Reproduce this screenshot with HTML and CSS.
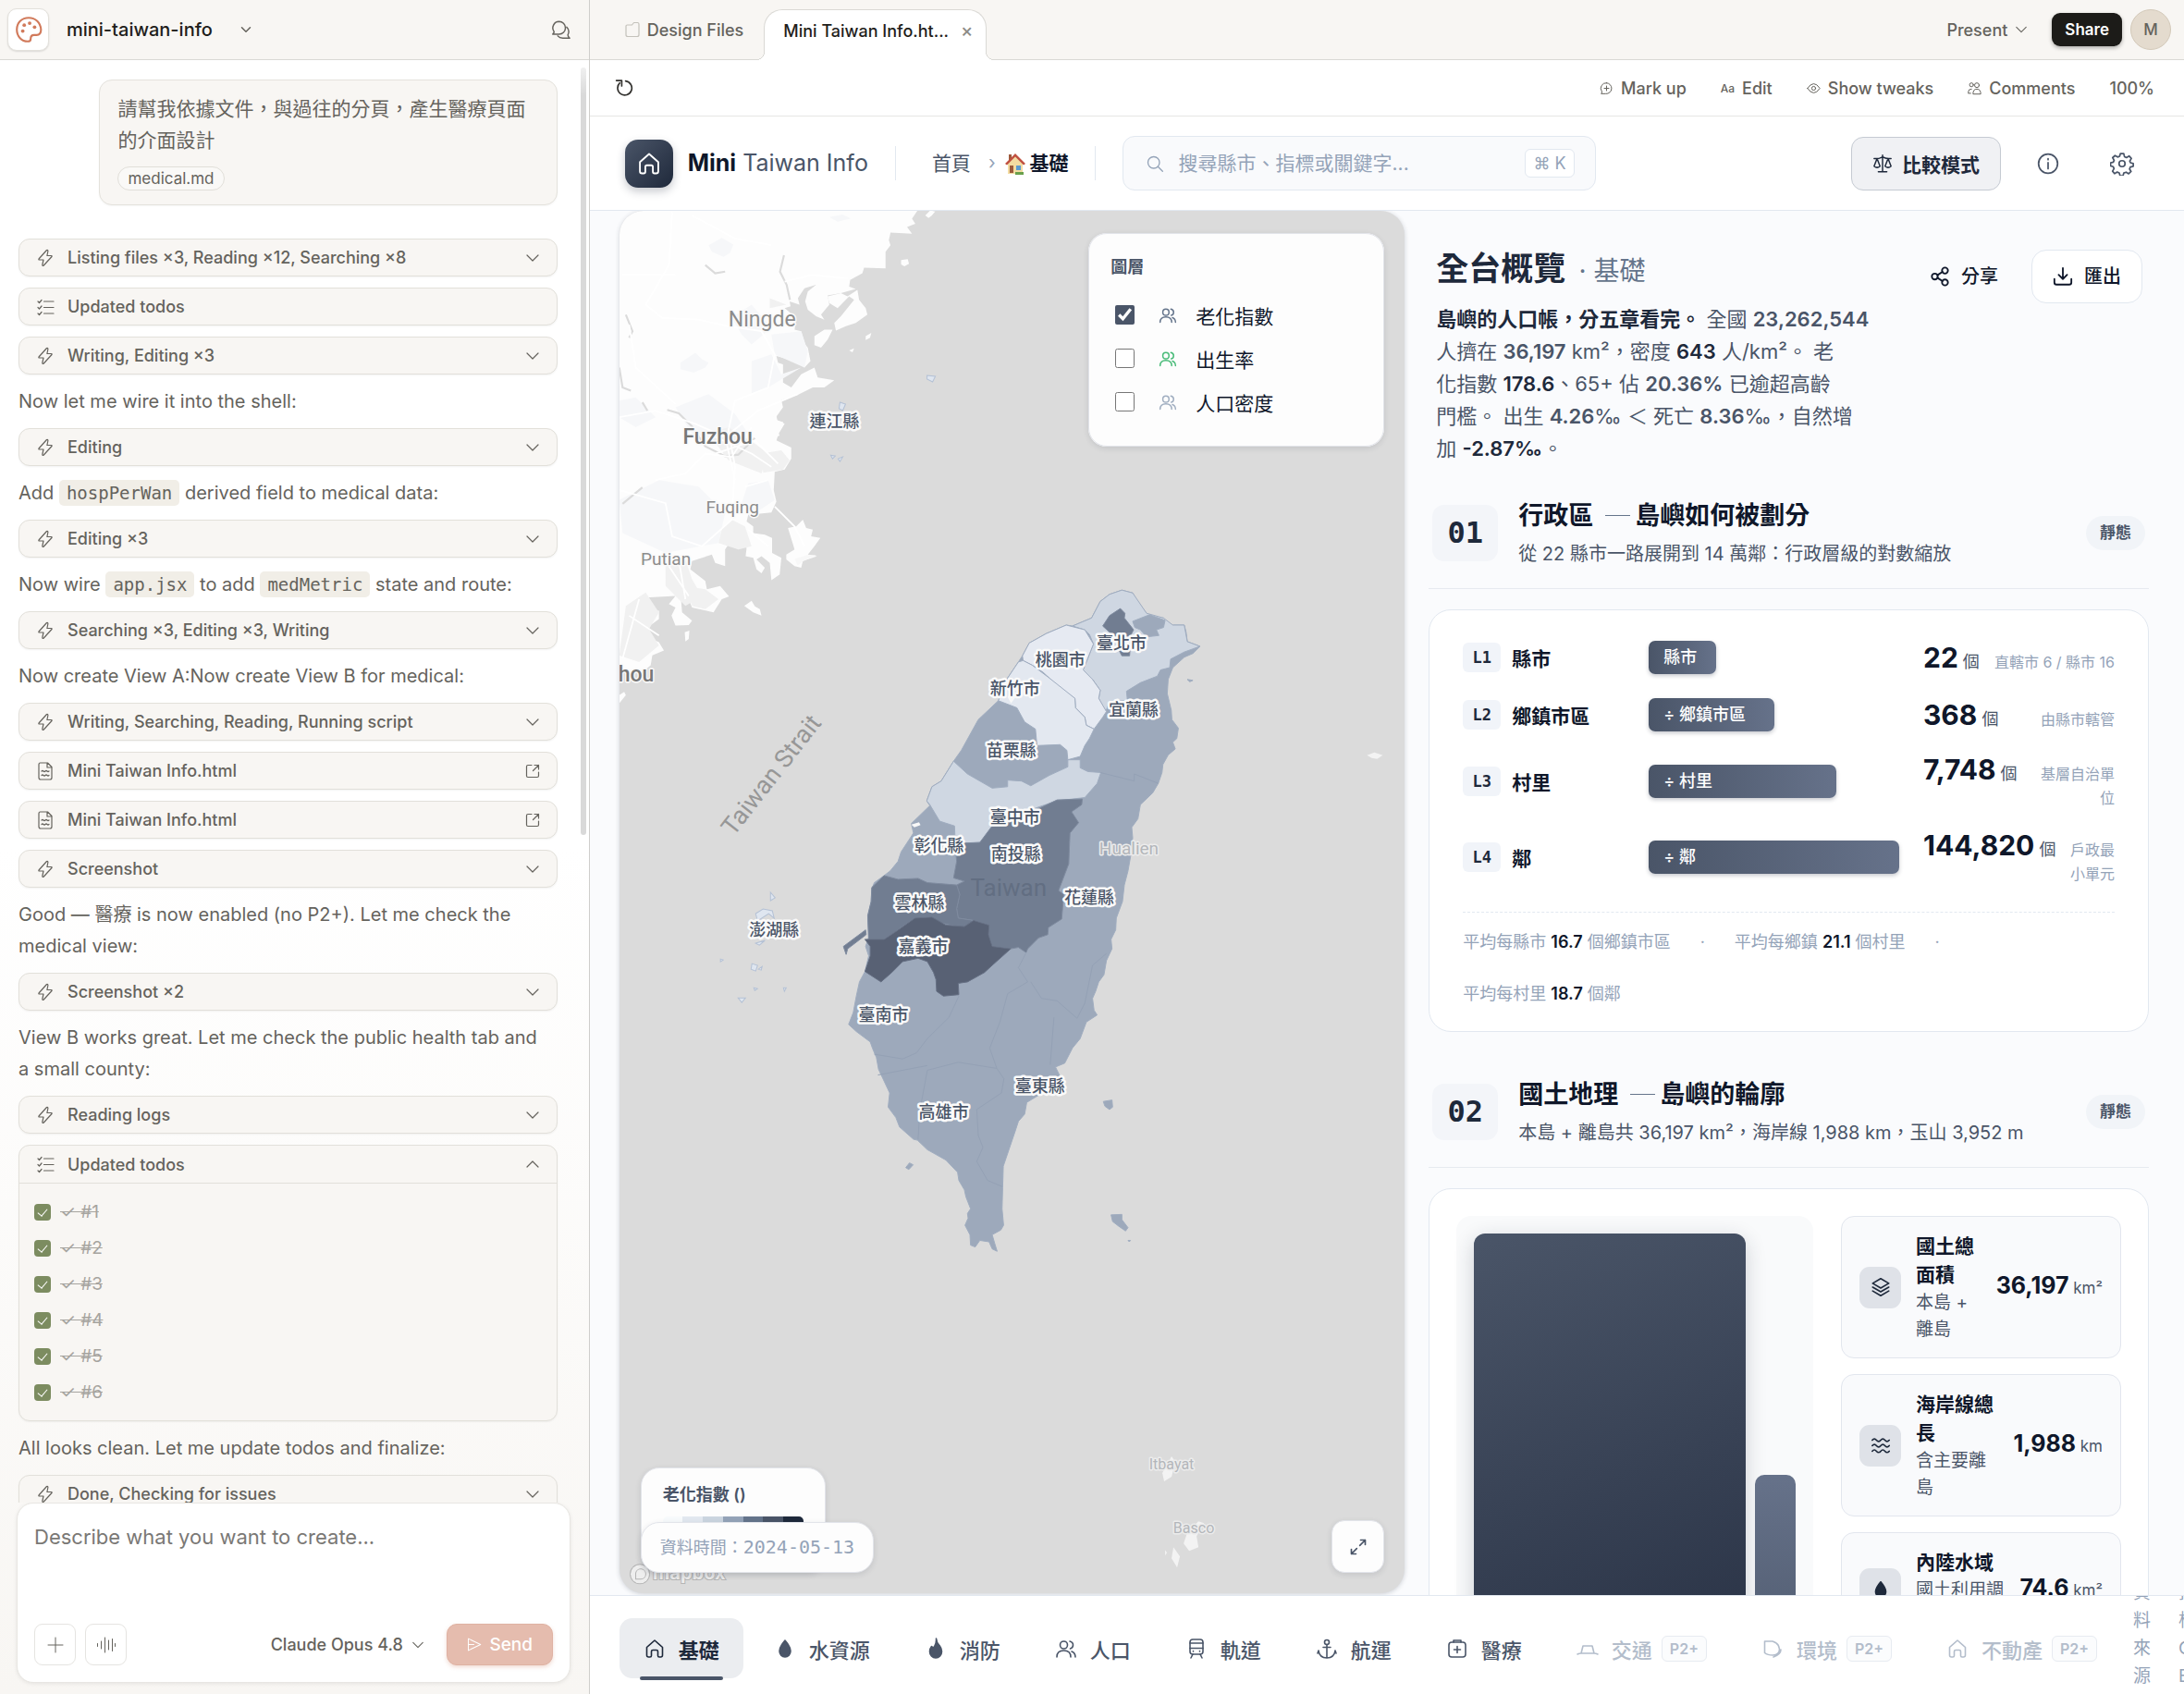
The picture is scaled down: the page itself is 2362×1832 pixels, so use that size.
FILE: index.html
```
<!DOCTYPE html>
<html lang="zh-Hant">

<head>
	<meta charset="utf-8">
	<meta name="viewport" content="width=device-width, initial-scale=1">
	<title>mini-taiwan-info</title>
	<link rel="stylesheet" href="styles.css">
</head>

<body>

	<!-- Shared icons -->
	<svg class="sprite" aria-hidden="true">
		<symbol id="i-down" viewBox="0 0 16 16"><path d="M2 5l6 6 6-6" /></symbol>
		<symbol id="i-up" viewBox="0 0 16 16"><path d="M2 11l6-6 6 6" /></symbol>
		<symbol id="i-bolt" viewBox="0 0 20 20"><path d="M11.500 1.500L3 11q-.5 1 .5 1h4.500L6.800 17.500q.2 1.600 1.500.5L17 8.500q.5-1-.5-1h-4.600l1-5q-.2-1.600-1.400-1z" /></symbol>
		<symbol id="i-todo" viewBox="0 0 20 20"><path d="M2 4l1.500 1.500L6 2.500M2 10.500L3.500 12 6 9M2 17l1.500 1.500L6 15.500M8.500 4H19M8.500 10.500H19M8.500 17H19" /></symbol>
		<symbol id="i-doc" viewBox="0 0 20 20"><path d="M4.500 1h8l4.500 4.500V17q0 2-2 2H5q-2 0-2-2V3q0-2 1.500-2zM12 1v5h5M6 10q1-1 2 0t2 0 2 0 2 0M6 14.500q1-1 2 0t2 0 2 0 2 0" /></symbol>
		<symbol id="i-open" viewBox="0 0 16 16"><path d="M7 1.500H3Q1.500 1.500 1.500 3v10q0 1.500 1.500 1.500h10q1.500 0 1.500-1.500V9M10 1.500h4.500V6M14.500 1.500L8.500 7.500" /></symbol>
		<symbol id="i-home" viewBox="0 0 24 24"><path d="M12 3L3.500 10.500V19q0 2 2 2H7q1.500 0 1.500-1.500V15q0-1.500 1.500-1.500h4q1.500 0 1.500 1.500v4.500q0 1.500 1.500 1.500h1.500q2 0 2-2v-8.500z" /></symbol>
		<symbol id="i-people" viewBox="0 0 24 24"><circle cx="9.500" cy="8" r="4" /><path d="M2 21q0-7 7.500-7t7.500 7M16 4q3.500.8 3.500 4T16.500 12M18 15q4 1.500 4 6" /></symbol>
		<symbol id="i-drop" viewBox="0 0 24 24"><path class="solid" d="M12 3q6 7 6 11.500a6 6.500 0 0 1-12 0Q6 10 12 3z" /></symbol>
	</svg>

	<!-- Chat side -->
	<aside class="chat">
		<header class="chat-head">
			<button class="brand-btn" aria-label="Projects">
				<svg viewBox="0 0 30 30"><path d="M15 3C8 3 3 8 3 15s5 12 11 12c2.500 0 3-1 3-2.500 0-2.500 1-4 3.500-4H23c3 0 4.500-2 4.500-5.500C27 8 22 3 15 3z" /><g class="dots"><circle cx="9" cy="16.500" r="1.800" /><circle cx="10.500" cy="10.500" r="1.800" /><circle cx="16" cy="8.500" r="1.800" /><circle cx="21" cy="12.500" r="1.800" /></g></svg>
			</button>
			<h1 class="project">mini-taiwan-info</h1>
			<svg class="ico small"><use href="#i-down" /></svg>
			<button class="plain chats-btn" aria-label="Chats">
				<svg class="ico" viewBox="0 0 24 24"><path d="M10.500 2.500a7.500 7.500 0 1 1 0 15H3q2-2 1.500-3.200A7.500 7.500 0 0 1 10.500 2.500zM19.500 9q4 4 1.500 9-.5 1.500 2 4h-8q-4 0-6-2.500" /></svg>
			</button>
		</header>

		<div class="feed">
			<div class="bubble">
				<p>請幫我依據文件，與過往的分頁，產生醫療頁面的介面設計</p>
				<span class="file-chip">medical.md</span>
			</div>

			<button class="step"><svg class="ico"><use href="#i-bolt" /></svg><span>Listing files ×3, Reading ×12, Searching ×8</span><svg class="ico end"><use href="#i-down" /></svg></button>
			<button class="step"><svg class="ico"><use href="#i-todo" /></svg><span>Updated todos</span></button>
			<button class="step"><svg class="ico"><use href="#i-bolt" /></svg><span>Writing, Editing ×3</span><svg class="ico end"><use href="#i-down" /></svg></button>
			<p class="say">Now let me wire it into the shell:</p>
			<button class="step"><svg class="ico"><use href="#i-bolt" /></svg><span>Editing</span><svg class="ico end"><use href="#i-down" /></svg></button>
			<p class="say">Add <code>hospPerWan</code> derived field to medical data:</p>
			<button class="step"><svg class="ico"><use href="#i-bolt" /></svg><span>Editing ×3</span><svg class="ico end"><use href="#i-down" /></svg></button>
			<p class="say">Now wire <code>app.jsx</code> to add <code>medMetric</code> state and route:</p>
			<button class="step"><svg class="ico"><use href="#i-bolt" /></svg><span>Searching ×3, Editing ×3, Writing</span><svg class="ico end"><use href="#i-down" /></svg></button>
			<p class="say">Now create View A:Now create View B for medical:</p>
			<button class="step"><svg class="ico"><use href="#i-bolt" /></svg><span>Writing, Searching, Reading, Running script</span><svg class="ico end"><use href="#i-down" /></svg></button>
			<button class="step"><svg class="ico"><use href="#i-doc" /></svg><span>Mini Taiwan Info.html</span><svg class="ico end"><use href="#i-open" /></svg></button>
			<button class="step"><svg class="ico"><use href="#i-doc" /></svg><span>Mini Taiwan Info.html</span><svg class="ico end"><use href="#i-open" /></svg></button>
			<button class="step"><svg class="ico"><use href="#i-bolt" /></svg><span>Screenshot</span><svg class="ico end"><use href="#i-down" /></svg></button>
			<p class="say">Good — 醫療 is now enabled (no P2+). Let me check the medical view:</p>
			<button class="step"><svg class="ico"><use href="#i-bolt" /></svg><span>Screenshot ×2</span><svg class="ico end"><use href="#i-down" /></svg></button>
			<p class="say">View B works great. Let me check the public health tab and<br>a small county:</p>
			<button class="step"><svg class="ico"><use href="#i-bolt" /></svg><span>Reading logs</span><svg class="ico end"><use href="#i-down" /></svg></button>
			<div class="todos">
				<button class="step"><svg class="ico"><use href="#i-todo" /></svg><span>Updated todos</span><svg class="ico end"><use href="#i-up" /></svg></button>
				<ul>
					<li><label><input type="checkbox" checked> <s>✓ #1</s></label></li>
					<li><label><input type="checkbox" checked> <s>✓ #2</s></label></li>
					<li><label><input type="checkbox" checked> <s>✓ #3</s></label></li>
					<li><label><input type="checkbox" checked> <s>✓ #4</s></label></li>
					<li><label><input type="checkbox" checked> <s>✓ #5</s></label></li>
					<li><label><input type="checkbox" checked> <s>✓ #6</s></label></li>
				</ul>
			</div>
			<p class="say">All looks clean. Let me update todos and finalize:</p>
			<button class="step"><svg class="ico"><use href="#i-bolt" /></svg><span>Done, Checking for issues</span><svg class="ico end"><use href="#i-down" /></svg></button>
			<div class="scroll-thumb"></div>
		</div>

		<form class="composer">
			<textarea aria-label="Message" placeholder="Describe what you want to create..."></textarea>
			<div class="composer-row">
				<button type="button" class="sq-btn" aria-label="Add"><svg class="ico" viewBox="0 0 20 20"><path d="M10 2v16M2 10h16" /></svg></button>
				<button type="button" class="sq-btn" aria-label="Voice"><svg class="ico" viewBox="0 0 20 20"><path d="M.5 8.500v3M4.500 6v8M8.500 2v16M12.500 5v10M16.500 3.500v13M19.500 8.500v3" /></svg></button>
				<button type="button" class="plain model">Claude Opus 4.8 <svg class="ico"><use href="#i-down" /></svg></button>
				<button type="button" class="send"><svg class="ico" viewBox="0 0 20 20"><path d="M3 2.500v15L18.500 10zM3 10h7" /></svg> Send</button>
			</div>
		</form>
	</aside>

	<!-- Preview side -->
	<main class="stage">
		<header class="tabs">
			<button class="tab"><svg class="ico pale" viewBox="0 0 16 18"><path d="M1 5v9.500Q1 16.500 3 16.500h10q2 0 2-2v-11q0-2-1.500-2H9.500L7.500 4H2.500Q1 4 1 5z" /></svg>Design Files</button>
			<div class="tab active"><span>Mini Taiwan Info.ht...</span><button class="plain close" aria-label="Close tab">×</button></div>
			<div class="tabs-end">
				<button class="plain present">Present <svg class="ico"><use href="#i-down" /></svg></button>
				<button class="share">Share</button>
				<span class="avatar">M</span>
			</div>
		</header>

		<div class="tools">
			<button class="plain reload" aria-label="Reload"><svg class="ico" viewBox="0 0 20 20"><path d="M6 4.500a7.300 7.300 0 1 0 6-2M2.500 2H8v5.500" /></svg></button>
			<button class="plain"><svg class="ico" viewBox="0 0 18 18"><path d="M9 2a7 7 0 1 1-1 14H2q1.500-1.500.8-3A7 7 0 0 1 9 2zM9 6v6M6 9h6" /></svg>Mark up</button>
			<button class="plain"><small>Aa</small>Edit</button>
			<button class="plain"><svg class="ico" viewBox="0 0 18 18"><path d="M1 9q8-12 16 0-8 12-16 0z" /><circle cx="9" cy="9" r="2.500" /></svg>Show tweaks</button>
			<button class="plain"><svg class="ico" viewBox="0 0 18 18"><circle cx="5" cy="4.500" r="2.500" /><circle cx="12" cy="5" r="3" /><path d="M1 15v-2q0-3 4-3M7 16q0-6 5-6t5 6zM1 15.500h3" /></svg>Comments</button>
			<button class="plain">100%</button>
		</div>

		<div class="app">
			<header class="app-head">
				<span class="logo"><svg class="ico"><use href="#i-home" /></svg></span>
				<span class="app-name"><b>Mini</b> Taiwan Info</span>
				<nav class="crumbs">
					<a href="#">首頁</a>
					<i>›</i>
					<svg class="house" viewBox="0 0 22 24"><path fill="#f3dca2" d="M3 12l8-8 8 8v11H3z" /><path fill="#9d5b3c" d="M4 2h3v6H4zM5 14h4v8H5z" /><path fill="#5c9bd0" d="M12 14h5v5h-5z" /><path fill="#c0503f" d="M0 12L11 1l11 11-2 1.500-9-9-9 9z" /><path fill="#69a04c" d="M11 21h9v3h-9z" /></svg>
					<b>基礎</b>
				</nav>
				<label class="search">
					<svg class="ico" viewBox="0 0 24 24"><circle cx="10.500" cy="10.500" r="7.500" /><path d="M16 16l6 6" /></svg>
					<input type="search" aria-label="搜尋" placeholder="搜尋縣市、指標或關鍵字...">
					<kbd>⌘ K</kbd>
				</label>
				<button class="compare"><svg class="ico" viewBox="0 0 24 24"><path d="M12 2v19M7 21.500h10M2 6h3q4 0 7-2 3 2 7 2h3M5.500 6l-3.500 9q3.500 3 7 0zM18.500 6L15 15q3.500 3 7 0z" /></svg>比較模式</button>
				<button class="plain round" aria-label="說明"><svg class="ico" viewBox="0 0 24 24"><circle cx="12" cy="12" r="9.500" /><path d="M12 11v6M12 7v1" /></svg></button>
				<button class="plain round" aria-label="設定"><svg class="ico" viewBox="0 0 24 24"><circle cx="12" cy="12" r="3" /><path d="M10.300 2h3.400l.7 3 2 .9L19 4.300l2.300 2.500-1.600 2.600.7 1.700 2.800.8v2.700l-2.900.7-.8 2 1.500 2.500-2.400 2.300-2.500-1.600-2.400.9-.7 2.600h-3l-.8-2.800-2-.8-2.700 1.600L2.500 19.500 4 17l-.8-2-2.700-.8v-3l2.800-.7.8-1.900L2.600 6 5 3.900l2.600 1.500 2-.8z" /></svg></button>
			</header>

			<div class="app-body">
				<section class="map">
					<svg class="map-art" viewBox="671 228 848 1495" preserveAspectRatio="xMidYMid slice">
						<!-- Fujian coast -->
						<g class="mainland" transform="translate(660 220) scale(.35714)">
							<path d="M20 10L935 20l-20 30 10 15-25 10 15 20-65-3-5 23 5 15-15 20v50l-65-2-5 17-37 20-3 20 20 7-45 13-40 7 5 28-25 30 10 15-25-10-25-20-8-25 8-30 25-20-35 10-20 30 5 20-30-10 3 15-18 5 35 30-5 35 20 5 12 40 8 10 8 40-18 20-30-20-55-15 5 20 15 5v55l25 15 30-40 40-20 10 30 50 8-30 22h-35l-45 22-50 16 5 22-25 35 30 15-18 30-7 20 45 22v33l-20 33-30 7-3 55 8 35-15 33-70 7-5 20 20 15v20l35 5 22 10v45l28 15-5 50-25 18-5-53-25-20-15 10 25 25-10 17-15-12-10-35-23-5 3-25-20-10-25-15-20 30v50l-30-10-10-25-60 20-5 25 45 35 5 25 40-10 27 32-22 8-25 40-65-15-10-25-25-20 5 60 30 25-10 13-40 2-12-30 12-25-20-10 20-25-90 5-15 10 10 30h45v25l-20 15-32 10 7 25 45 20 15 25-35 15-5 30-25 20H20z" />
							<path d="M660 285l40-10 20 10 30-20 5 30 20 25 5 20-35 25-30 10-30 13-5-23 20-20 40-50-15-10-35 35-25-15zM620 405l30-20h25l-15 30-20 25-20-8zM775 405l17-10-4 15-13 7zM725 448l15-6-5 12zM540 985l25-5 20-20 10 25 20 5-5 20 28 5-18 25-20 25 28 5-43 15-5 20-20-5-25-20v-15l25-15zM408 1220l22-15 10 17 15 8 5 20-25-10zM228 1300l14-5-2 25-10 8zM30 1490l15-10 5 10-20 25zM955 40l15-15 15 3-10 12-10 8zM882 175l20-3 4 14-14 8-10-6zM495 640l10 5 3 15 18 5-5 8-20-5zM450 710l30-30 25 5 10 20-25 10-30 15z" />
							<g class="hills"><path d="M300 130l40-22 35 20-10 25-20 12-35-15zM215 485l45-30 20 20 20 10-10 15-35 15-40-10zM370 350l60-40 60 70-60 50-30-30zM430 480l60-20 30 60 60-20-100 60-50 20zM490 400l90-10 20 60-10 50-90-40zM200 620l100-40 80 60 40 60-80 20-90-20zM30 600l50-10 60 60-60 30-50-30zM30 900l120-60 120 20 80 80-20 90-160 30-130-60zM420 850l60-10 20 60-60 40-40-30zM665 45l40-8 25 12-40 10z" /></g>
							<g class="town"><path d="M300 700l60-20 80 50 40 30-20 60-100-40zM460 760l60-10 25 30-20 28-60 10zM370 960l40 20 20 60-40 10-60-20 10-40zM170 1090l60-10 20 60 30 50-50 30-60-60zM50 1220l60-40 40 60-30 50 30 50-60 50-60-20zM230 1160l60 10 40 30-40 30-40-10zM485 290l50 20-50 10z" /></g>
							<g class="river"><path d="M528 160l-12 50 20 40 10 45M290 190l30 25 30-5M50 340l20 50-10 20M30 500l10 60 25 10M100 605l15 25M175 628l35 10 40 40 40 60 60 30 40-5 50-50M40 912l60-50" /></g>
							<g class="roads"><path d="M190 30l-10 160-70 120 50 40 110 5 90 20 100 15 40 70-20 100-100 40-20 90 20 110-10 160-90 80-90-30-20-100-140-40M30 650l110-20 120 40 90 40 100-80 120-50M140 840l90-20 60-60 80 10 60-90M300 700l130 60 60 40M320 760l120-40 70 70M350 710l30 130M410 860l70-20M210 1080l20 120M180 1100l60 90M60 1250l90 60M90 1200l-50 180M60 370l20 130 120 110M250 40l130 70 110 20M40 220l160 0M530 240l80-20 110 10M500 920l60 60 30 60M420 990l60 50" /></g>
						</g>

						<g class="taiwan" transform="translate(860 600) scale(.33333 .5102)">
							<path class="c4" d="M1060 76l35 6 17 20 28 23 20 8 35 2 5 12 25 3h37l6 15 4 20 41 10-23 15-28 8-37 22-15 25-3 30 13 35 2 20 21 18-5 22-13 8 8 14-23 13-17 20-3 17-12 23-18 20-40 25-8 30-20 18 3 22-7 40-8 30-12 30-6 35-20 35-2 25-15 20 3 20-18 25-8 30-17 15-10 20-10 15 5 25 10 10-35 15-20 35-25 20-25 32-30 8 15 20-10 15-60 25-38 15-7 25-20 15-10 20-39 75-2 45-2 45 5 35-9 10-28 10 8 18 8 17-16-5-10-15-30-3-15 14-15-4-2-22-16-20 10-15-2-10 10-10-15-25-5-15-18-20-4-17-38-26-60-22-32-20-13-2-45-26-12-20-25-22 5-30-18-25-18-25-7-25-13-20-7-13-45-22-25-15 15-25 10-35 10-30 18-22 12-33-10-20 10-20-3-45 11-30 2-25 8-15 32-15 20-10 25-20 10-20 40-40-7-20 60-38-10-10 17-30 30-12 40-42 25-23 55-65 65-40 30-48 35-34 13-13 22-27 55-20 65-18 20 2 62-17 28-35 30-15z" />
							<path class="c2" d="M900 152l62-17 28-35 30-15 40-9 35 6 45 43 55 10 30 15h37l10 35 41 10-51 12-44 15-3 18-30 5-10 13-55 14-45 18 3 20-58 2-12 21-23-28 5-17-25-23-25-3-8-17 18-25 18-30-13-20-15-10z" />
							<path class="c4" d="M1095 142l55-14 50 12-5 15-23 5 8 12-40 3-20-15-18-5z" />
							<path class="c5" d="M1055 115l15 10-2 10 30 25-8 10-5 45h-25l-8-10 3-25-35-15-22-13 22-22z" />
							<path class="c1" d="M738 215l22-27 55-20 65-18 60 10 28 30-33 55 30 20 25 23-5 17 25 28-12 12-28 25-25-8-5-17-30-20-2-20-48-20-35-23-20-12-35-15-30-10z" />
							<path class="c1 b" d="M725 228l15-3 30 10 55 27 83 43 2 20 30 20 5 17 25 8-15 20-15 15-15 23-40 7-3-20-22-12-75 2-5-35-35-15-25-30-60-15 30-48z" />
							<path class="c2" d="M515 438l45 27 80 30 50-3v-14l45 2 30 10 60-22 60-18v-15h40v17l25 8 42 2-12 23-40 30-40 3-50 4-60 13-150 40-15 20-25 15-50 2-30-7-2-30-48-10-32-35-10-8 17-30 30-12z" />
							<path class="c5" d="M600 610l40-35 80-15 130-40 82-2-2 12-33 15 23 23-28 22-2 30-2 35-33 57 17 8-7 52-43 18-2 15-30 7-35 23-5 8-25-11-25 3-60-5-12-25 2-20-50-10-50-5-5-20 10-30-10-20 25-8-35-7 10-35-5-38z" />
							<path class="c5" d="M290 680l45 8 65-2 30 9 95 5 10 20-10 30 5 20 50 5v15l-50-2-60-8-25-12-55 2-45 20-20 10-35 15h-50l-3-50 11-30 2-30zM158 830l72-35 2 10-60 30-5 12z" />
							<path class="c6" d="M228 815h62l35-15 65-30 55-2 45 17 60 3 30-13 50 10-2 20 12 25 60 5-60 35-25 15-55 20-30 3 2 24-50 3-22-10-2-25-8-15-20-23-30-7-50 7-35 23-35 20-52-22 17-33v-20z" />
							<path class="c4" d="M1000 1158l28-3 2 15-10 5-15-7zM1025 1398l35-1v11l20 17-8 7-22-10-20-10zM360 1298l12-10 12 4-14 10zM1272 265l18 2-10 3zM1080 1452h8l-4 3z" />
							<path class="borders" d="M258 1058l92 10 45-13 35-30 70-45 32-45M400 1238l5-58 25-88 100-17 125 13-23-43 33-55 25-60 65-25-30-30 25-32M655 1088l23 22-8 30-80 35 5 55 15 25-20 30 35 40 47 13M990 462l110 18v-15l78 20M765 905l35 35 50 5 65 37 25-32 25-80 45-25M840 980l-12 100M270 1102l160-20" />
							<path class="sand" d="M378 572l25-5 5 6-20 5zM0 10l40-8 30 0-40 12-20 10zM690 302l15-14 18 8-22 20z" />
						</g>

						<!-- Penghu, Matsu and the small islands to the south -->
						<path class="islets" d="M834 965l5 6-5 3zM818 988l8-5 10 2 2 8-6-5-12 8zM818 1020l10-3-6 5zM814 1042l6 2-2 6-5-2zM821 1048l4-3-1 4zM799 1079l8 0-4 5zM816 1068l4 1-3 2zM848 1068l3 0-2 4zM780 1037l3 1-3 2zM909 436l6 2-3 7-4-2zM1003 407l9 1-3 6-6-3zM899 493l5 1-3 3zM907 497l5-2-3 5z" />
						<path class="far" d="M1478 817l8-3 9 3-6 4-6-1zM1267 1574l4 6-4 16-8 5-2-9zM1296 1644l6 2-8 14 2 12-10 4-6-8 4-12zM1269 1672l7 10-3 12-6-10zM1260 1675l2 3-2 3z" />

						<g class="places">
							<text x="825" y="354" font-size="23">Ningde</text>
							<text class="strong" x="777" y="481" font-size="23">Fuzhou</text>
							<text x="793" y="556" font-size="19">Fuqing</text>
							<text x="721" y="612" font-size="19">Putian</text>
							<text class="strong" x="689" y="737" font-size="23">hou</text>
							<text class="ghost" x="1221" y="924" font-size="19">Hualien</text>
							<text class="ghost" x="1267" y="1588" font-size="16">Itbayat</text>
							<text class="ghost" x="1291" y="1657" font-size="16">Basco</text>
							<text class="inland" x="1091" y="969" font-size="26">Taiwan</text>
							<text class="strait" transform="translate(842 844) rotate(-52)" font-size="27">Taiwan Strait</text>
						</g>
						<g class="counties">
							<text x="903" y="463">連江縣</text>
							<text x="1213" y="702">臺北市</text>
							<text x="1147" y="720">桃園市</text>
							<text x="1098" y="751">新竹市</text>
							<text x="1226" y="774">宜蘭縣</text>
							<text x="1094" y="818">苗栗縣</text>
							<text x="1098" y="890">臺中市</text>
							<text x="1016" y="921">彰化縣</text>
							<text x="1099" y="930">南投縣</text>
							<text x="995" y="983">雲林縣</text>
							<text x="1178" y="977">花蓮縣</text>
							<text x="999" y="1030">嘉義市</text>
							<text x="956" y="1104">臺南市</text>
							<text x="1125" y="1181">臺東縣</text>
							<text x="1021" y="1209">高雄市</text>
							<text x="838" y="1012">澎湖縣</text>
						</g>
						<g class="mapbox">
							<circle cx="693" cy="1701" r="10" /><path d="M689 1706v-6a5 5 0 1 1 5 6z" />
							<text x="707" y="1707">mapbox</text>
						</g>
					</svg>

					<fieldset class="layers">
						<legend>圖層</legend>
						<label><input type="checkbox" checked><svg class="ico"><use href="#i-people" /></svg>老化指數</label>
						<label><input type="checkbox"><svg class="ico green"><use href="#i-people" /></svg>出生率</label>
						<label><input type="checkbox"><svg class="ico gray"><use href="#i-people" /></svg>人口密度</label>
					</fieldset>

					<div class="legend">
						<b>老化指數 ()</b>
						<div class="ramp"><i></i><i></i><i></i><i></i><i></i><i></i><i></i></div>
					</div>
					<div class="stamp">資料時間：<span>2024-05-13</span></div>
					<button class="expand" aria-label="放大"><svg class="ico" viewBox="0 0 24 24"><path d="M14 10l7-7M15 3h6v6M10 14l-7 7M3 15v6h6" /></svg></button>
				</section>

				<section class="panel">
					<div class="overview">
						<div>
							<h2>全台概覽 <span>· 基礎</span></h2>
							<p><b class="dark">島嶼的人口帳，分五章看完。</b> 全國 <b>23,262,544</b><br>人擠在 <b>36,197</b> km²，密度 <b class="dark">643</b> 人/km²。 老<br>化指數 <b class="dark">178.6</b>、65+ 佔 <b>20.36%</b> 已逾超高齡<br>門檻。 出生 <b>4.26</b>‰ ＜ 死亡 <b>8.36</b>‰，自然增<br>加 <b class="dark">-2.87‰</b>。</p>
						</div>
						<div class="actions">
							<button class="plain"><svg class="ico" viewBox="0 0 24 24"><circle cx="6" cy="12" r="3.500" /><circle cx="18" cy="5" r="3.500" /><circle cx="18" cy="19" r="3.500" /><path d="M9 10.500l6-4M9 13.500l6 4" /></svg>分享</button>
							<button class="outlined"><svg class="ico" viewBox="0 0 24 24"><path d="M12 2v13M7 10l5 5 5-5M2 15v4q0 2.500 2.500 2.500h15Q22 21.500 22 19v-4" /></svg>匯出</button>
						</div>
					</div>

					<header class="chapter">
						<span class="num">01</span>
						<div>
							<h3>行政區<i></i>島嶼如何被劃分</h3>
							<p>從 22 縣市一路展開到 14 萬鄰：行政層級的對數縮放</p>
						</div>
						<span class="pill">靜態</span>
					</header>
					<div class="card levels">
						<div class="level">
							<code>L1</code><b>縣市</b>
							<div class="track"><span style="width: 27%">縣市</span></div>
							<div class="val"><span><strong>22</strong> 個</span><small>直轄市 6 / 縣市 16</small></div>
						</div>
						<div class="level">
							<code>L2</code><b>鄉鎮市區</b>
							<div class="track"><span style="width: 50%">÷ 鄉鎮市區</span></div>
							<div class="val"><span><strong>368</strong> 個</span><small>由縣市轄管</small></div>
						</div>
						<div class="level">
							<code>L3</code><b>村里</b>
							<div class="track"><span style="width: 75%">÷ 村里</span></div>
							<div class="val"><span><strong>7,748</strong> 個</span><small>基層自治單<br>位</small></div>
						</div>
						<div class="level">
							<code>L4</code><b>鄰</b>
							<div class="track"><span style="width: 100%">÷ 鄰</span></div>
							<div class="val"><span><strong>144,820</strong> 個</span><small>戶政最<br>小單元</small></div>
						</div>
						<p class="averages">
							<span>平均每縣市 <b>16.7</b> 個鄉鎮市區</span><span>·</span><span>平均每鄉鎮 <b>21.1</b> 個村里</span><span>·</span><span>平均每村里 <b>18.7</b> 個鄰</span>
						</p>
					</div>

					<header class="chapter next">
						<span class="num">02</span>
						<div>
							<h3>國土地理<i></i>島嶼的輪廓</h3>
							<p>本島 + 離島共 36,197 km²，海岸線 1,988 km，玉山 3,952 m</p>
						</div>
						<span class="pill">靜態</span>
					</header>
					<div class="card land">
						<div class="shape"><span class="main-island"></span><span class="outer-island"></span></div>
						<div class="stats">
							<div class="stat">
								<span class="badge"><svg class="ico" viewBox="0 0 24 24"><path d="M12 2l9.500 5.500L12 13 2.500 7.500zM2.500 12l9.500 5.500 9.500-5.500M2.500 16.500L12 22l9.500-5.500" /></svg></span>
								<div><b>國土總面積</b><p>本島 +<br>離島</p></div>
								<div class="big"><strong>36,197</strong> km²</div>
							</div>
							<div class="stat">
								<span class="badge"><svg class="ico" viewBox="0 0 24 24"><path d="M2 6q2.500-3 5 0t5 0 5 0 5 0M2 12.500q2.500-3 5 0t5 0 5 0 5 0M2 19q2.500-3 5 0t5 0 5 0 5 0" /></svg></span>
								<div><b>海岸線總長</b><p>含主要離島</p></div>
								<div class="big"><strong>1,988</strong> km</div>
							</div>
							<div class="stat">
								<span class="badge"><svg class="ico"><use href="#i-drop" /></svg></span>
								<div><b>內陸水域</b><p>國土利用調查</p></div>
								<div class="big"><strong>74.6</strong> km²</div>
							</div>
						</div>
					</div>
				</section>
			</div>

			<nav class="dock">
				<a class="on" href="#"><svg class="ico"><use href="#i-home" /></svg>基礎</a>
				<a href="#"><svg class="ico"><use href="#i-drop" /></svg>水資源</a>
				<a href="#"><svg class="ico" viewBox="0 0 24 24"><path class="solid" d="M12.500 1q.5 5 3.500 7.500 2.500 3 2.500 6.500a6.500 7 0 0 1-13 0q0-3 2-5.500 1 1.500 2 1.500Q13 7 12.500 1z" /></svg>消防</a>
				<a href="#"><svg class="ico"><use href="#i-people" /></svg>人口</a>
				<a href="#"><svg class="ico" viewBox="0 0 24 24"><rect x="5" y="2" width="14" height="16" rx="3" /><path d="M5 11.500h14M5 6h14M8 18l-2 4M16 18l2 4M8.500 14.500v.5M15.500 14.500v.5" /></svg>軌道</a>
				<a href="#"><svg class="ico" viewBox="0 0 24 24"><circle cx="12" cy="5" r="2.500" /><path d="M12 7.500V22M8 10.500h8M3 14q1 8 9 8t9-8M3 14l-1 3M21 14l1 3" /></svg>航運</a>
				<a href="#"><svg class="ico" viewBox="0 0 24 24"><rect x="3" y="5" width="18" height="16" rx="3" /><path d="M8 5V3h8v2M12 9.500v7M8.500 13h7" /></svg>醫療</a>
				<a class="off" href="#"><svg class="ico" viewBox="0 0 24 24"><path d="M7 9h10l2 8H5zM1 18q2-1 4-1h14q2 0 4 1" /></svg>交通 <em>P2+</em></a>
				<a class="off" href="#"><svg class="ico" viewBox="0 0 24 24"><path d="M3.500 4H12q7 2 7.500 8.500 0 6-7 6.500-6 0-9-2.500zM13 21q8-3 8-8" /></svg>環境 <em>P2+</em></a>
				<a class="off" href="#"><svg class="ico"><use href="#i-home" /></svg>不動產 <em>P2+</em></a>
				<div class="credits"><a href="#">資料來源</a><a href="#">指標CEM</a></div>
			</nav>
		</div>
	</main>

</body>

</html>
```
FILE: styles.css
```
* {
	box-sizing: border-box;
}

body {
	display: flex;
	height: 100vh;
	margin: 0;
	overflow: hidden;
	font-family: Inter, "Noto Sans CJK TC", sans-serif;
	font-size: 20px;
	color: #65635d;
	background: #fff;
}

h1,
h2,
h3,
p,
ul,
fieldset {
	margin: 0;
	padding: 0;
	border: 0;
}

button,
input,
textarea {
	font: inherit;
	color: inherit;
}

button {
	cursor: pointer;
}

a {
	color: inherit;
	text-decoration: none;
}

i,
em {
	font-style: normal;
}

code,
.num {
	font-family: "DejaVu Sans Mono", monospace;
}

.sprite {
	position: absolute;
	width: 0;
	height: 0;
}

.ico {
	flex: none;
	width: 20px;
	height: 20px;
	fill: none;
	stroke: currentColor;
	stroke-width: 1.2;
	stroke-linecap: round;
	stroke-linejoin: round;
}

.solid {
	fill: currentColor;
}

.plain {
	display: flex;
	align-items: center;
	padding: 0;
	border: 0;
	background: none;
}

/* Chat */
.chat {
	display: flex;
	flex: 0 0 27%;
	flex-direction: column;
	min-width: 0;
	border-right: 1px solid #cfcecb;
	background: linear-gradient(#fff 50%, #f8f6f3);
}

.chat-head {
	display: flex;
	flex: none;
	align-items: center;
	height: 65px;
	padding: 0 20px 0 8px;
	border-bottom: 1px solid #dad9d5;
	background: #f8f6f3;
}

.brand-btn {
	display: flex;
	align-items: center;
	justify-content: center;
	width: 45px;
	height: 46px;
	padding: 0;
	border: 1px solid #e3e1dc;
	border-radius: 10px;
	background: #fff;
	box-shadow: 0 1px 2px rgba(0, 0, 0, .12);
}

.brand-btn svg {
	width: 32px;
	height: 32px;
	fill: none;
	stroke: #d17a5b;
	stroke-width: 2;
}

.brand-btn .dots {
	fill: #d17a5b;
	stroke: none;
}

.project {
	margin: 0 30px 0 19px;
	font-size: 20px;
	font-weight: 500;
	color: #1f1e1b;
}

.ico.small {
	width: 12px;
	height: 12px;
	stroke-width: 2;
}

.chats-btn {
	margin-left: auto;
}

.chats-btn .ico {
	width: 22px;
	height: 22px;
	stroke-width: 1.6;
}

.feed {
	position: relative;
	display: flex;
	flex: 1;
	flex-direction: column;
	gap: 12px;
	min-height: 0;
	padding: 21px 34px 0 20px;
	overflow: hidden;
}

.feed > * {
	flex: none;
}

.bubble {
	align-self: flex-end;
	width: 85%;
	margin-bottom: 24px;
	padding: 14px 19px 12px;
	line-height: 34px;
	font-size: 21px;
	border: 1px solid #e4e2dc;
	border-radius: 14px;
	background: #f8f6f3;
	box-shadow: 0 1px 2px rgba(0, 0, 0, .04);
}

.file-chip {
	display: inline-block;
	margin-top: 11px;
	padding: 0 10px;
	line-height: 24px;
	font-size: 17px;
	border: 1px solid #e1dfd9;
	border-radius: 13px;
	background: #faf9f7;
}

.step {
	display: flex;
	align-items: center;
	gap: 14px;
	width: 100%;
	height: 41px;
	padding: 0 18px;
	font-size: 18px;
	font-weight: 500;
	text-align: left;
	border: 1px solid #e2e0da;
	border-radius: 12px;
	background: #f8f6f3;
	box-shadow: 0 1px 2px rgba(0, 0, 0, .05);
}

.step .end {
	width: 16px;
	height: 16px;
	margin-left: auto;
}

.say {
	line-height: 34px;
}

.say code {
	padding: 3px 8px;
	font-size: 19px;
	border-radius: 5px;
	background: #f1eee7;
}

.todos {
	border: 1px solid #e2e0da;
	border-radius: 12px;
	background: #f8f6f3;
	box-shadow: 0 1px 2px rgba(0, 0, 0, .05);
}

.todos .step {
	border-width: 0 0 1px;
	border-radius: 0;
	background: none;
	box-shadow: none;
}

.todos ul {
	padding: 11px 16px;
	list-style: none;
}

.todos label {
	display: flex;
	align-items: center;
	gap: 10px;
	height: 39px;
	font-size: 19px;
	color: #a6a49f;
}

.todos input {
	display: flex;
	justify-content: center;
	width: 18px;
	height: 18px;
	margin: 0;
	appearance: none;
	border-radius: 4px;
	background: #7c8c60;
}

.todos input:checked::before {
	content: "";
	width: 5px;
	height: 9px;
	margin-top: 3px;
	border: solid #fff;
	border-width: 0 1px 1px 0;
	transform: rotate(40deg);
}

.scroll-thumb {
	position: absolute;
	top: 8px;
	right: 3px;
	width: 6px;
	height: 830px;
	border-radius: 3px;
	background: linear-gradient(#f0f0f0, #d9d9d9 30px);
}

.composer {
	display: flex;
	flex: none;
	flex-direction: column;
	margin: 0 20px 12px 18px;
	padding: 16px 18px 18px;
	border: 1px solid #e8e6e2;
	border-radius: 18px;
	background: #fff;
	box-shadow: 0 1px 4px rgba(0, 0, 0, .08);
}

.composer textarea {
	height: 114px;
	padding: 7px 0;
	font-size: 22px;
	border: 0;
	outline: 0;
	resize: none;
	background: none;
}

.composer ::placeholder {
	color: #7a7875;
}

.composer-row {
	display: flex;
	align-items: center;
	gap: 10px;
}

.sq-btn {
	display: flex;
	align-items: center;
	justify-content: center;
	width: 45px;
	height: 45px;
	padding: 0;
	border: 1px solid #e5e4e1;
	border-radius: 9px;
	background: #fff;
}

.sq-btn .ico {
	stroke-width: 1;
}

.model {
	gap: 9px;
	margin-left: auto;
	margin-right: 14px;
	font-size: 18px;
	font-weight: 500;
}

.model .ico,
.present .ico {
	width: 14px;
	height: 14px;
}

.send {
	display: flex;
	align-items: center;
	justify-content: center;
	gap: 8px;
	width: 115px;
	height: 45px;
	font-size: 19px;
	font-weight: 500;
	color: #fff;
	border: 1px solid #dfb2a3;
	border-radius: 11px;
	background: #e5bcae;
	box-shadow: 0 2px 4px rgba(200, 110, 80, .25);
}

.send .ico {
	width: 17px;
	height: 17px;
}

/* Preview frame */
.stage {
	display: flex;
	flex: 1;
	flex-direction: column;
	min-width: 0;
}

.tabs {
	display: flex;
	flex: none;
	align-items: flex-end;
	height: 65px;
	padding: 0 14px 0 38px;
	font-size: 18px;
	font-weight: 500;
	border-bottom: 1px solid #dad9d5;
	background: #f8f6f3;
}

.tab {
	display: flex;
	align-items: center;
	gap: 8px;
	height: 54px;
	padding: 0 22px 10px 0;
	font-weight: 500;
	border: 0;
	background: none;
}

.tab .ico {
	width: 16px;
	height: 18px;
}

.pale {
	color: #c4c2bb;
}

.tab.active {
	position: relative;
	gap: 13px;
	height: 55px;
	margin-bottom: -1px;
	padding: 0 14px 10px 20px;
	color: #1f1e1b;
	border: 1px solid #dad9d5;
	border-bottom: 0;
	border-radius: 20px 20px 0 0;
	background: #fff;
}

.tab.active::before,
.tab.active::after {
	content: "";
	position: absolute;
	bottom: 0;
	width: 9px;
	height: 9px;
}

.tab.active::before {
	right: 100%;
	background: radial-gradient(circle at 0 0, #f8f6f3 8px, #dad9d5 8px, #dad9d5 9px, #fff 9px);
}

.tab.active::after {
	left: 100%;
	background: radial-gradient(circle at 100% 0, #f8f6f3 8px, #dad9d5 8px, #dad9d5 9px, #fff 9px);
}

.close {
	font-size: 20px;
	color: #8d8b86;
}

.tabs-end {
	display: flex;
	align-items: center;
	align-self: center;
	gap: 9px;
	margin-left: auto;
}

.present {
	gap: 8px;
	margin-right: 17px;
	font-weight: 500;
}

.share {
	height: 36px;
	padding: 0 14px;
	font-size: 17px;
	font-weight: 600;
	color: #fff;
	border: 0;
	border-radius: 9px;
	background: #1c1b18;
	box-shadow: 0 2px 4px rgba(0, 0, 0, .3);
}

.avatar {
	width: 44px;
	height: 44px;
	line-height: 42px;
	font-size: 17px;
	text-align: center;
	border: 1px solid #d3c9b9;
	border-radius: 50%;
	background: #e4dbce;
}

.tools {
	display: flex;
	flex: none;
	align-items: center;
	gap: 37px;
	height: 61px;
	padding: 0 32px 0 26px;
	font-size: 18px;
	border-bottom: 1px solid #e6e6e4;
}

.tools .plain {
	gap: 8px;
	font-weight: 500;
}

.tools .ico {
	width: 15px;
	height: 15px;
}

.tools small {
	font-size: 12px;
}

.tools .reload {
	margin-right: auto;
	color: #33322f;
}

.tools .reload .ico {
	width: 21px;
	height: 21px;
	stroke-width: 1.6;
}

/* App */
.app {
	display: flex;
	flex: 1;
	flex-direction: column;
	min-height: 0;
	color: #4a5568;
	background: #fafbfd;
}

.app-head {
	display: flex;
	flex: none;
	align-items: center;
	height: 102px;
	padding: 0 39px 0 38px;
	border-bottom: 1px solid #e2e8f0;
	background: #fff;
}

.app-head .ico {
	stroke-width: 1.6;
}

.logo {
	display: flex;
	align-items: center;
	justify-content: center;
	width: 52px;
	height: 52px;
	color: #fff;
	border-radius: 14px;
	background: linear-gradient(135deg, #4a5568, #1f293b);
	box-shadow: 0 4px 10px rgba(30, 41, 59, .25);
}

.logo .ico {
	width: 28px;
	height: 28px;
}

.app-name {
	margin-left: 16px;
	padding-right: 29px;
	line-height: 37px;
	font-size: 25px;
	white-space: nowrap;
	border-right: 1px solid #e2e8f0;
}

.app-name b {
	color: #0f172a;
}

.crumbs {
	display: flex;
	align-items: center;
	margin-left: 39px;
	padding-right: 28px;
	line-height: 37px;
	font-size: 21px;
	white-space: nowrap;
	border-right: 1px solid #e2e8f0;
}

.crumbs i {
	margin: 0 10px 0 19px;
	font-size: 20px;
	color: #94a3b8;
}

.crumbs b {
	color: #0f172a;
}

.house {
	width: 22px;
	height: 24px;
	margin-right: 5px;
}

.search {
	display: flex;
	flex: 0 1 512px;
	align-items: center;
	gap: 16px;
	height: 59px;
	margin: 0 auto 0 29px;
	padding: 0 22px 0 24px;
	color: #94a3b8;
	border: 1px solid #e2e8f0;
	border-radius: 13px;
	background: #f9fafc;
}

.search input {
	flex: 1;
	min-width: 0;
	padding: 0;
	font-size: 21px;
	border: 0;
	outline: 0;
	background: none;
}

.search ::placeholder {
	color: #94a3b8;
}

kbd {
	padding: 0 8px;
	line-height: 29px;
	font-family: Inter, "DejaVu Sans", sans-serif;
	font-size: 18px;
	border: 1px solid #e2e8f0;
	border-radius: 6px;
	background: #fff;
}

.compare {
	display: flex;
	align-items: center;
	gap: 10px;
	height: 58px;
	margin-right: 23px;
	padding: 0 22px;
	font-size: 21px;
	font-weight: 600;
	color: #1e293b;
	border: 1px solid #c5cad2;
	border-radius: 13px;
	background: #f0f1f4;
}

.compare .ico {
	width: 22px;
	height: 22px;
}

.round {
	justify-content: center;
	width: 56px;
	height: 56px;
}

.round + .round {
	margin-left: 24px;
}

.round .ico {
	width: 26px;
	height: 26px;
}

.app-body {
	display: grid;
	flex: 1;
	grid-template-columns: 12fr 11fr;
	gap: 26px;
	min-height: 0;
	padding: 0 38px 0 32px;
	overflow: hidden;
}

/* Map */
.map {
	position: relative;
	min-height: 0;
	margin-bottom: 2px;
	overflow: hidden;
	border-radius: 26px;
	background: #dbdbdb;
	box-shadow: 0 1px 5px rgba(30, 41, 59, .2);
}

.map-art {
	display: block;
	width: 100%;
	height: 100%;
}

.mainland {
	fill: #fdfdfd;
}

.hills {
	fill: #f6f7f9;
}

.town {
	fill: #f1f1f1;
}

.river,
.roads {
	fill: none;
	stroke: #dbdbdb;
	stroke-width: 6;
}

.roads {
	stroke: #fff;
	stroke-width: 5;
}

.taiwan path {
	stroke: #a0adc0;
	stroke-width: 1;
	stroke-linejoin: round;
	vector-effect: non-scaling-stroke;
}

.taiwan .c1 {
	fill: #e6eaf2;
}

.taiwan .c1.b {
	fill: #e3e8f0;
}

.taiwan .c2 {
	fill: #cfd7e2;
}

.taiwan .c4 {
	fill: #9da9bb;
}

.taiwan .c5 {
	fill: #717d91;
	stroke: #7f8b9f;
}

.taiwan .c6 {
	fill: #586174;
	stroke: #667084;
}

.taiwan .borders {
	fill: none;
	stroke: #94a1b5;
}

.taiwan .sand {
	fill: #f8f8f8;
	stroke: none;
}

.islets {
	fill: #dfe6f0;
	stroke: #b4c1d5;
}

.far {
	fill: #f3f3f3;
}

.places,
.counties {
	text-anchor: middle;
	paint-order: stroke;
	stroke: #fafafa;
	stroke-width: 3;
	stroke-linejoin: round;
}

.places {
	font-family: Roboto, sans-serif;
	fill: #8c8c8c;
}

.places .strong {
	font-weight: 500;
	fill: #777;
}

.places .ghost {
	fill: #b3b6ba;
	stroke: #ececec;
}

.places .inland {
	fill: #626e82;
	stroke: none;
}

.places .strait {
	fill: #979797;
	stroke: none;
}

.counties {
	font-size: 18px;
	font-weight: 500;
	fill: #4a5568;
	stroke-width: 5;
}

.mapbox {
	font-size: 20px;
	font-weight: 700;
	fill: #eee;
	stroke: #b5b5b5;
	stroke-width: 2;
	paint-order: stroke;
}

.layers,
.legend,
.stamp,
.expand {
	position: absolute;
	border: 1px solid #e2e4ea;
	border-radius: 20px;
	background: #fdfdfd;
	box-shadow: 0 2px 6px rgba(30, 41, 59, .12);
}

.layers {
	top: 24px;
	right: 22px;
	width: 320px;
	padding: 20px 23px 24px;
}

.layers legend {
	float: left;
	width: 100%;
	margin-bottom: 12px;
	padding: 0;
	line-height: 32px;
	font-size: 18px;
	font-weight: 600;
}

.layers label {
	display: flex;
	clear: both;
	align-items: center;
	height: 47px;
	padding-left: 5px;
	font-size: 21px;
	color: #0f172a;
}

.layers input {
	width: 21px;
	height: 21px;
	margin: 0 26px 0 0;
	accent-color: #4a5568;
}

.layers .ico {
	margin-right: 20px;
	color: #64748b;
	stroke-width: 1.8;
}

.layers .green {
	color: #48bb78;
}

.layers .gray {
	color: #a0aec0;
}

.legend {
	bottom: 22px;
	left: 23px;
	width: 200px;
	height: 114px;
	padding: 14px 23px;
	font-size: 18px;
}

.legend b {
	display: block;
	line-height: 30px;
	font-weight: 600;
}

.ramp {
	display: flex;
	height: 15px;
	margin-top: 8px;
	overflow: hidden;
	border-radius: 5px;
}

.ramp i {
	flex: 1;
	background: #f7fafc;
}

.ramp i:nth-child(2) {
	background: #e2e8f0;
}

.ramp i:nth-child(3) {
	background: #cbd5e0;
}

.ramp i:nth-child(4) {
	background: #94a3b8;
}

.ramp i:nth-child(5) {
	background: #64748b;
}

.ramp i:nth-child(6) {
	background: #4a5568;
}

.ramp i:nth-child(7) {
	background: #1e293b;
}

.stamp {
	bottom: 22px;
	left: 23px;
	padding: 0 20px;
	line-height: 53px;
	font-size: 18px;
	color: #94a3b8;
}

.stamp span {
	font-family: "DejaVu Sans Mono", monospace;
	font-size: 20px;
}

.expand {
	right: 22px;
	bottom: 22px;
	display: flex;
	align-items: center;
	justify-content: center;
	width: 57px;
	height: 57px;
	border-radius: 14px;
}

.expand .ico {
	stroke-width: 2;
}

/* Data panel */
.panel {
	min-width: 0;
	min-height: 0;
	padding-top: 38px;
	overflow: hidden;
}

.overview {
	display: flex;
	justify-content: space-between;
	padding: 0 7px 0 8px;
	line-height: 35px;
	font-size: 22px;
}

.overview h2 {
	margin-bottom: 10px;
	line-height: 49px;
	font-size: 35px;
	color: #1e293b;
}

.overview h2 span {
	margin-left: 6px;
	font-size: 28px;
	font-weight: 400;
	color: #64748b;
}

.overview p {
	white-space: nowrap;
}

.overview b {
	font-weight: 600;
}

.dark {
	color: #1e293b;
}

.actions {
	display: flex;
	gap: 36px;
	height: 58px;
	margin-top: 4px;
	font-size: 20px;
}

.actions button {
	gap: 12px;
	font-weight: 500;
	color: #0f172a;
}

.actions .ico {
	width: 22px;
	height: 22px;
	stroke-width: 2;
}

.outlined {
	display: flex;
	align-items: center;
	padding: 0 22px;
	border: 1px solid #e2e8f0;
	border-radius: 16px;
	background: #fff;
}

.chapter {
	display: flex;
	align-items: center;
	gap: 22px;
	height: 100px;
	margin-top: 34px;
	margin-bottom: 22px;
	padding: 0 4px 20px;
	border-bottom: 1px solid #e6eaf0;
}

.chapter.next {
	margin-top: 47px;
}

.num {
	flex: none;
	width: 71px;
	line-height: 61px;
	font-size: 32px;
	font-weight: 700;
	text-align: center;
	color: #1e293b;
	border-radius: 13px;
	background: #f3f5f9;
}

.chapter h3 {
	display: flex;
	align-items: center;
	line-height: 44px;
	font-size: 27px;
	color: #0f172a;
}

.chapter h3 i {
	width: 27px;
	height: 1px;
	margin: 0 5px 0 13px;
	background: #64748b;
}

.chapter p {
	line-height: 38px;
	white-space: nowrap;
}

.pill {
	margin-left: auto;
	padding: 0 15px;
	line-height: 37px;
	font-size: 17px;
	font-weight: 600;
	border-radius: 19px;
	background: #f1f4f8;
}

.card {
	border: 1px solid #e2e8f0;
	border-radius: 24px;
	background: #fff;
}

.levels {
	display: flex;
	flex-direction: column;
	gap: 20px;
	padding: 30px 36px 22px;
}

.level {
	display: grid;
	grid-template-columns: 41px 160px minmax(0, 1fr) 207px;
	align-items: center;
	min-height: 42px;
}

.level code {
	line-height: 32px;
	font-size: 17px;
	font-weight: 700;
	text-align: center;
	color: #1e293b;
	border-radius: 6px;
	background: #f1f4f9;
}

.level > b {
	padding-left: 12px;
	font-size: 21px;
	font-weight: 600;
	color: #0f172a;
}

.track {
	margin-right: 26px;
}

.track span {
	display: block;
	padding-left: 16px;
	line-height: 36px;
	font-size: 18px;
	font-weight: 500;
	white-space: nowrap;
	color: #fff;
	border-radius: 7px;
	background: linear-gradient(90deg, #4a5568, #66728a);
	box-shadow: 0 2px 4px rgba(30, 41, 59, .25);
}

.val {
	display: flex;
	justify-content: space-between;
	align-items: baseline;
	line-height: 26px;
	font-size: 18px;
	white-space: nowrap;
}

.val strong {
	line-height: 36px;
	font-size: 30px;
	font-weight: 700;
	color: #0f172a;
}

.val small {
	font-size: 16px;
	text-align: right;
	color: #94a3b8;
}

.averages {
	display: flex;
	flex-wrap: wrap;
	gap: 20px 32px;
	margin-top: 8px;
	padding-top: 14px;
	line-height: 36px;
	font-size: 18px;
	color: #94a3b8;
	border-top: 1px dashed #e2e8f0;
}

.averages b {
	font-weight: 600;
	color: #0f172a;
}

.land {
	display: grid;
	grid-template-columns: 386fr 303fr;
	gap: 30px;
	padding: 29px;
}

.shape {
	display: flex;
	align-items: flex-end;
	gap: 10px;
	min-height: 560px;
	padding: 19px;
	border-radius: 16px;
	background: #f9fafb;
}

.main-island {
	flex: 295;
	height: 100%;
	border-radius: 12px;
	background: linear-gradient(160deg, #4a5568, #262f42);
	box-shadow: 0 6px 22px rgba(30, 41, 59, .2);
}

.outer-island {
	flex: 44;
	height: 50%;
	border-radius: 10px;
	background: linear-gradient(#66728a, #4a5568);
}

.stats {
	display: flex;
	flex-direction: column;
	gap: 17px;
}

.stat {
	display: flex;
	align-items: center;
	gap: 16px;
	padding: 16px 19px;
	line-height: 31px;
	border: 1px solid #e2e6ee;
	border-radius: 14px;
	background: #f9fafc;
}

.badge {
	display: flex;
	flex: none;
	align-items: center;
	justify-content: center;
	width: 45px;
	height: 45px;
	color: #1e293b;
	border-radius: 11px;
	background: #dfe2e8;
}

.stat .ico {
	width: 22px;
	height: 22px;
	stroke-width: 1.8;
}

.stat > div:nth-child(2) {
	flex: 1;
	min-width: 0;
}

.stat b {
	display: block;
	font-size: 21px;
	font-weight: 600;
	color: #0f172a;
}

.stat p {
	line-height: 29px;
	font-size: 19px;
}

.big {
	flex: none;
	font-size: 17px;
	white-space: nowrap;
}

.big strong {
	font-size: 25px;
	color: #0f172a;
}

/* Bottom navigation */
.dock {
	display: flex;
	flex: none;
	gap: 7px;
	align-items: center;
	height: 107px;
	padding: 7px 0 0 32px;
	overflow: hidden;
	font-size: 22px;
	font-weight: 500;
	border-top: 1px solid #e2e8f0;
	background: #fff;
}

.dock > a {
	position: relative;
	display: flex;
	flex: none;
	align-items: center;
	gap: 14px;
	height: 65px;
	padding: 0 26px;
	border-radius: 14px;
}

.dock .ico {
	width: 24px;
	height: 24px;
	stroke-width: 1.6;
}

.dock .on {
	font-weight: 700;
	color: #1e293b;
	background: #ebedf0;
}

.dock .on::after {
	content: "";
	position: absolute;
	right: 22px;
	bottom: -2px;
	left: 22px;
	height: 4px;
	border-radius: 2px;
	background: #4a5568;
}

.dock .off {
	color: #b3bdcb;
}

.dock em {
	margin-left: -4px;
	padding: 0 8px;
	line-height: 26px;
	font-size: 16px;
	font-weight: 600;
	border: 1px solid #e7ebf1;
	border-radius: 6px;
	background: #fbfcfd;
}

.credits {
	display: flex;
	flex: none;
	gap: 30px;
	margin-left: 6px;
	line-height: 30px;
	font-size: 19px;
	font-weight: 400;
	color: #94a3b8;
}

.credits a {
	width: 19px;
	word-break: break-all;
}
```
